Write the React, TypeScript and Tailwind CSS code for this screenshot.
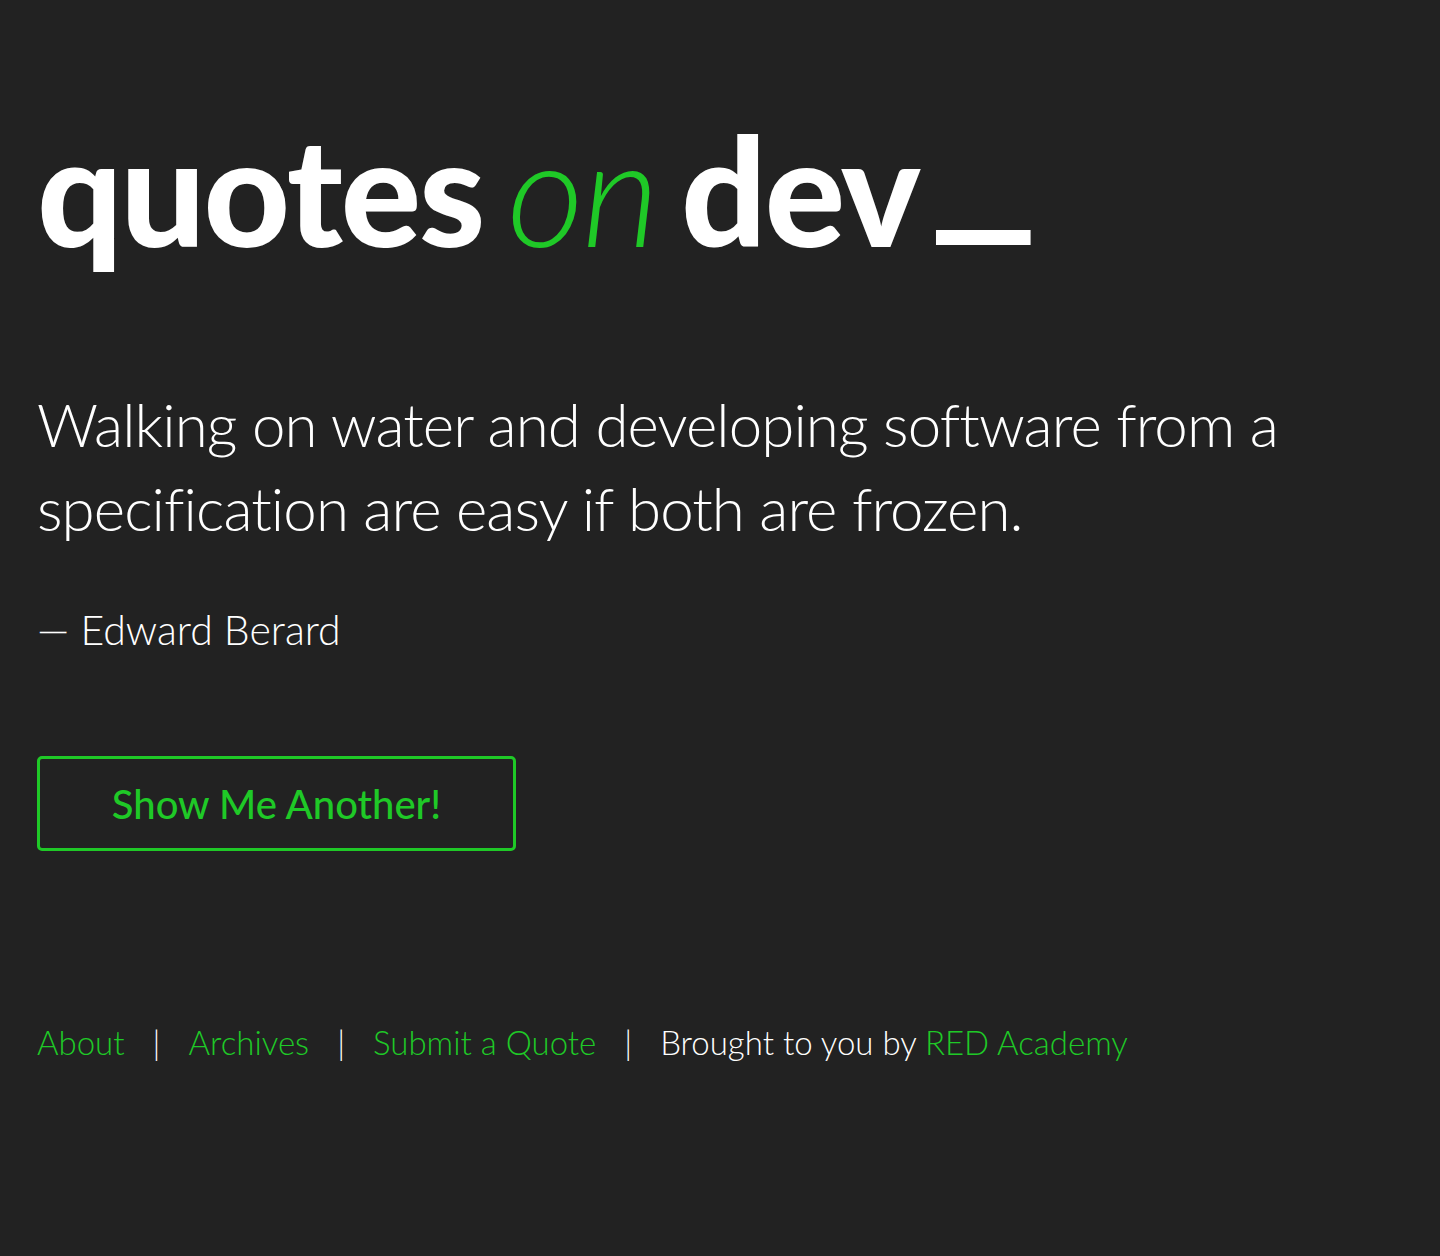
import React from 'react';

const green = 'text-[#1fc927]';

export default function App() {
  return (
    <div className="min-h-screen w-full bg-[#222222] font-['Lato','Open_Sans',sans-serif] text-white">
      <div className="px-[37px] pt-[94px]">
        {/* Logo */}
        <h1 className="text-[150px] leading-[190px] font-black tracking-[-2px] [word-spacing:-10px]">
          quotes <span className={`${green} font-light italic`}>on</span> dev
          <span className="ml-[8px] inline-block origin-left -translate-y-[37px] scale-x-[1.6] scale-y-[1.15]">_</span>
        </h1>

        {/* Quote */}
        <section className="mt-[98px] max-w-[1300px]">
          <p className="text-[60px] leading-[84px] font-light tracking-[-0.9px]">
            Walking on water and developing software from a specification are easy if both are frozen.
          </p>
          <p className="mt-[52px] text-[41px] leading-[56px] font-light">— Edward Berard</p>
        </section>

        <button className="mt-[98px] w-[479px] h-[95px] rounded-[5px] border-[3px] border-[#1fc927] text-[40px] font-medium text-[#1fc927]">
          Show Me Another!
        </button>

        {/* Footer */}
        <footer className="mt-[171px] flex items-center text-[33px] leading-[40px] font-light">
          <a className={green}>About</a>
          <span className="mx-[28px]">|</span>
          <a className={green}>Archives</a>
          <span className="mx-[28px]">|</span>
          <a className={green}>Submit a Quote</a>
          <span className="mx-[28px]">|</span>
          <span>
            Brought to you by <a className={green}>RED Academy</a>
          </span>
        </footer>
      </div>
    </div>
  );
}
